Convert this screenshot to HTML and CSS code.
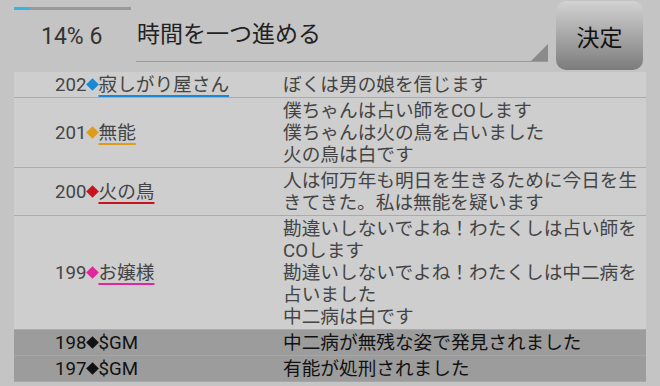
FILE: index.html
```html
<!DOCTYPE html>
<html lang="ja">
<head>
    <meta charset="UTF-8">
    <meta name="viewport" content="width=device-width, initial-scale=1.0">
    <title>Log</title>
    <link rel="stylesheet" href="styles.css">
</head>
<body>
    <div class="topbar">
        <div class="status">
            <div class="progress"><div class="progress-fill" style="width: 14%"></div></div>
            <div class="status-text">14% 6</div>
        </div>
        <div class="action-select">時間を一つ進める</div>
        <button class="submit-btn">決定</button>
    </div>

    <div class="log">
        <div class="log-row">
            <div class="speaker">202<span class="mark blue"></span><span class="name blue">寂しがり屋さん</span></div>
            <div class="message">ぼくは男の娘を信じます</div>
        </div>
        <div class="log-row">
            <div class="speaker">201<span class="mark orange"></span><span class="name orange">無能</span></div>
            <div class="message">僕ちゃんは占い師をCOします<br>僕ちゃんは火の鳥を占いました<br>火の鳥は白です</div>
        </div>
        <div class="log-row">
            <div class="speaker">200<span class="mark red"></span><span class="name red">火の鳥</span></div>
            <div class="message">人は何万年も明日を生きるために今日を生きてきた。私は無能を疑います</div>
        </div>
        <div class="log-row">
            <div class="speaker">199<span class="mark pink"></span><span class="name pink">お嬢様</span></div>
            <div class="message">勘違いしないでよね！わたくしは占い師をCOします<br>勘違いしないでよね！わたくしは中二病を占いました<br>中二病は白です</div>
        </div>
        <div class="log-row gm">
            <div class="speaker">198<span class="mark"></span>$GM</div>
            <div class="message">中二病が無残な姿で発見されました</div>
        </div>
        <div class="log-row gm">
            <div class="speaker">197<span class="mark"></span>$GM</div>
            <div class="message">有能が処刑されました</div>
        </div>
    </div>
</body>
</html>
```

FILE: styles.css
```css
body {
    margin: 0;
    height: 386px;
    overflow: hidden;
    background-color: #c4c4c4;
    font-family: Roboto, "Noto Sans CJK JP", sans-serif;
    color: #444;
}

.topbar {
    display: flex;
    height: 72px;
    padding: 0 17px 0 14px;
}

.status {
    width: 117px;
}

.progress {
    height: 3px;
    margin-top: 7px;
    background-color: #999;
}

.progress-fill {
    height: 100%;
    background-color: #33b5e5;
}

.status-text {
    margin-top: 13px;
    padding-left: 27px;
    font-size: 23px;
    color: #333;
}

.action-select {
    position: relative;
    flex: 1;
    height: 41px;
    margin: 0 8px 0 5px;
    padding: 20px 0 0 1px;
    border-bottom: 1px solid #9a9a9a;
    font-size: 23px;
    line-height: 30px;
    color: #222;
}

.action-select::after {
    content: "";
    position: absolute;
    right: 0;
    bottom: 0;
    border-left: 17px solid transparent;
    border-bottom: 17px solid #8a8a8a;
}

.submit-btn {
    width: 87px;
    height: 69px;
    margin-top: 1px;
    border: none;
    border-radius: 10px;
    background: linear-gradient(#d2d2d2, #7c7c7c);
    font-family: inherit;
    font-size: 23px;
    color: #111;
    padding: 0;
}

.log {
    margin: 0 14px;
    font-size: 18.67px;
    line-height: 22px;
}

.log-row {
    display: grid;
    grid-template-columns: 269px 1fr;
    background-color: #cecece;
    border-bottom: 1px solid #ababab;
}

.log-row.gm {
    background-color: #9c9c9c;
    border-bottom-color: #a6a6a6;
    color: #111;
}

.speaker {
    display: flex;
    align-items: center;
    padding-left: 41px;
}

.message {
    padding: 2px 4px 1px 0;
}

.mark {
    display: inline-block;
    width: 9px;
    height: 9px;
    margin: 0 1.5px;
    transform: rotate(45deg);
    background-color: #111;
}

.name {
    text-decoration: underline;
    text-decoration-thickness: 2px;
    text-underline-offset: 4px;
}

.mark.blue { background-color: #1a88d2; }
.mark.orange { background-color: #dc9c1e; }
.mark.red { background-color: #c8141e; }
.mark.pink { background-color: #e0289c; }

.name.blue { text-decoration-color: #1a88d2; }
.name.orange { text-decoration-color: #dc9c1e; }
.name.red { text-decoration-color: #c8141e; }
.name.pink { text-decoration-color: #e0289c; }
```
